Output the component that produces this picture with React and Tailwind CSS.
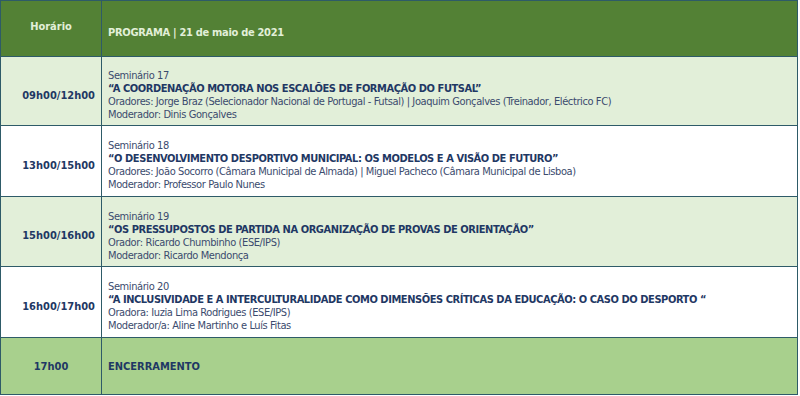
import React from 'react';

const font = { fontFamily: '"DejaVu Sans Condensed", Tahoma, "DejaVu Sans", sans-serif' };

const sessions = [
  {
    time: '09h00/12h00',
    num: 'Seminário 17',
    title: '“A COORDENAÇÃO MOTORA NOS ESCALÕES DE FORMAÇÃO DO FUTSAL”',
    speakers: 'Oradores: Jorge Braz (Selecionador Nacional de Portugal - Futsal) | Joaquim Gonçalves (Treinador, Eléctrico FC)',
    mod: 'Moderador: Dinis Gonçalves',
    bg: 'bg-[#e2efd9]',
    h: 'h-[69px]',
  },
  {
    time: '13h00/15h00',
    num: 'Seminário 18',
    title: '“O DESENVOLVIMENTO DESPORTIVO MUNICIPAL: OS MODELOS E A VISÃO DE FUTURO”',
    speakers: 'Oradores: João Socorro (Câmara Municipal de Almada) | Miguel Pacheco (Câmara Municipal de Lisboa)',
    mod: 'Moderador: Professor Paulo Nunes',
    bg: 'bg-white',
    h: 'h-[71px]',
  },
  {
    time: '15h00/16h00',
    num: 'Seminário 19',
    title: '“OS PRESSUPOSTOS DE PARTIDA NA ORGANIZAÇÃO DE PROVAS DE ORIENTAÇÃO”',
    speakers: 'Orador: Ricardo Chumbinho (ESE/IPS)',
    mod: 'Moderador: Ricardo Mendonça',
    bg: 'bg-[#e2efd9]',
    h: 'h-[70px]',
  },
  {
    time: '16h00/17h00',
    num: 'Seminário 20',
    title: '“A INCLUSIVIDADE E A INTERCULTURALIDADE COMO DIMENSÕES CRÍTICAS DA EDUCAÇÃO: O CASO DO DESPORTO “',
    speakers: 'Oradora: Iuzia Lima Rodrigues (ESE/IPS)',
    mod: 'Moderador/a: Aline Martinho e Luís Fitas',
    bg: 'bg-white',
    h: 'h-[71px]',
  },
];

export default function App() {
  return (
    <div className="w-[800px] h-[396px] bg-white" style={font}>
      <table className="w-[798px] border-collapse border border-[#2e5b68] text-[11px] leading-[13px]">
        <tbody>
          <tr className="h-[56px] bg-[#538135] text-[#e2efd9] font-bold">
            <td className="w-[101px] border border-[#2e5b68] text-center align-top pt-[19px]">Horário</td>
            <td className="border border-[#2e5b68] pl-[6px] pt-[7px] tracking-[-0.3px]">PROGRAMA | 21 de maio de 2021</td>
          </tr>
          {sessions.map((s) => (
            <tr key={s.num} className={`${s.bg} ${s.h}`}>
              <td className="border border-[#2e5b68] text-right pr-[6px] pt-[8px] font-bold text-[#1f3864]">{s.time}</td>
              <td className="border border-[#2e5b68] pl-[6px] pt-[8px] text-[#3b4b6e] tracking-[-0.4px]">
                <div>{s.num}</div>
                <div className="font-bold text-[#1f3864] tracking-[-0.43px]">{s.title}</div>
                <div>{s.speakers}</div>
                <div>{s.mod}</div>
              </td>
            </tr>
          ))}
          <tr className="h-[57px] bg-[#a8d08d] font-bold text-[#1f3864]">
            <td className="border border-[#2e5b68] text-center">17h00</td>
            <td className="border border-[#2e5b68] pl-[6px]">ENCERRAMENTO</td>
          </tr>
        </tbody>
      </table>
    </div>
  );
}
